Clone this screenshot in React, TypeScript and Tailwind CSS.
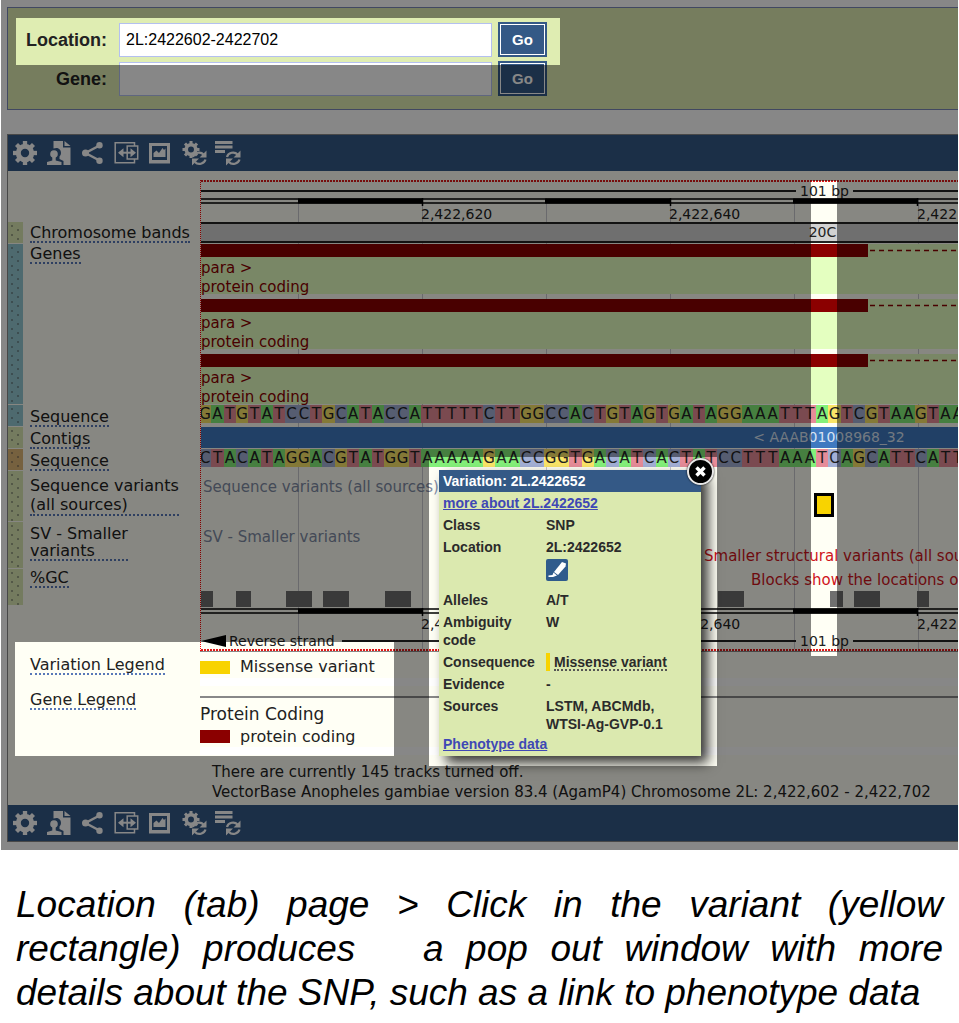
import type { ReactNode } from "react";

const FORWARD = "GATGTATCCTGCATACCATTTTTCTTGGCCACTGTAGTGATAGGAAATTTAGTCGTAAGTAA";
const REVERSE = "CTACATAGGACGTATGGTAAAAAGAACCGGTGACATCACTATCCTTTAAATCAGCATTCATT";

const baseColour: Record<string, string> = {
  A: "bg-[#84f07a]",
  C: "bg-[#a3b0d6]",
  G: "bg-[#fae568]",
  T: "bg-[#e68c98]",
};

function Gear({ cx, cy, r }: { cx: number; cy: number; r: number }) {
  const teeth = [0, 45, 90, 135, 180, 225, 270, 315];
  return (
    <g stroke="currentColor" fill="none">
      <circle cx={cx} cy={cy} r={r * 0.56} strokeWidth={r * 0.42} />
      {teeth.map((a) => (
        <path
          key={a}
          d={`M${cx} ${cy - r * 0.65}V${cy - r}`}
          strokeWidth={r * 0.36}
          transform={`rotate(${a} ${cx} ${cy})`}
        />
      ))}
    </g>
  );
}

function Reload() {
  return (
    <g>
      <path d="M10 16c1-4.500 7.500-6 10.500-2.500M22.500 18.500c-1.200 4.500-7.500 6-10.500 2.500" fill="none" stroke="currentColor" strokeWidth="2.200" />
      <path d="M23.500 9.500v7h-7zM9 24.500v-7h7z" fill="currentColor" />
    </g>
  );
}

const tools: { label: string; art: ReactNode }[] = [
  { label: "Configure this page", art: <Gear cx={12} cy={12} r={12} /> },
  {
    label: "Manage your data",
    art: (
      <g>
        <path d="M6.500 0h9.500v6.500h7.500V24H16.500v-4l-4-2v-2.500c2.500-2.500 1.800-7-1.500-8.300-1.500-.5-3-.2-4.500.3z" fill="currentColor" />
        <path d="M17.500 0l6 5h-6z" fill="currentColor" />
        <circle cx="7" cy="13" r="3.800" fill="currentColor" />
        <path d="M5.300 15h3.400v4.500l5.800 1.500V24H0v-3l5.300-1.500z" fill="currentColor" />
      </g>
    ),
  },
  {
    label: "Share this page",
    art: (
      <g fill="currentColor">
        <path d="M18.500 4.500L4.500 12l14 7.500" fill="none" stroke="currentColor" strokeWidth="2.500" />
        <circle cx="18.500" cy="4.300" r="3.200" />
        <circle cx="4.500" cy="12" r="3.500" />
        <circle cx="18.500" cy="19.700" r="3.200" />
      </g>
    ),
  },
  {
    label: "Resize this image",
    art: (
      <g fill="none" stroke="currentColor">
        <path d="M19.500 5V1.700H.2v20h19.300V18M12.200 5h10.500v13H12.200z" strokeWidth="1.500" />
        <path d="M4.500 11.700h14.500" strokeWidth="2" />
        <path d="M8.500 7.200v9L3 11.700zM15.500 7.200v9l5.500-4.500z" fill="currentColor" stroke="none" />
      </g>
    ),
  },
  {
    label: "Export this image",
    art: (
      <g>
        <path d="M0 2h21v20.500H0zM3 5v14h15V5z" fill="currentColor" fillRule="evenodd" />
        <path d="M4.500 16v-4l3-2.500 2.500 2.500 3.500-5 1.500 2 1.500-1.500V16z" fill="currentColor" />
      </g>
    ),
  },
  {
    label: "Reset configuration",
    art: (
      <g>
        <Gear cx={8} cy={8.5} r={8.5} />
        <Reload />
      </g>
    ),
  },
  {
    label: "Reset track order",
    art: (
      <g>
        <path d="M-2 1.500h17.500M-2 6h17.500M-2 10.500h10" stroke="currentColor" strokeWidth="2.800" />
        <Reload />
      </g>
    ),
  },
];

function Toolbar() {
  return (
    <div className="flex h-9 items-center gap-2.5 bg-[#345986] pl-[5px] text-white">
      {tools.map((t) => (
        <button key={t.label} type="button" aria-label={t.label} className="size-6">
          <svg viewBox="0 0 24 24" className="size-6 overflow-visible">
            {t.art}
          </svg>
        </button>
      ))}
    </div>
  );
}

function SearchRow({ id, label, value }: { id: string; label: string; value: string }) {
  return (
    <div className="flex h-[35px] items-center">
      <label htmlFor={id} className="w-[99px] text-right text-lg font-bold text-[#222]">
        {label}
      </label>
      <input
        id={id}
        defaultValue={value}
        className="ml-3 h-[34px] w-[373px] border border-[#b4c0f0] bg-white px-[6px] text-base text-black"
      />
      <button
        type="button"
        className="ml-[6px] h-[35px] w-[49px] border border-[#345986] bg-[#345986] p-px text-[15px] font-bold text-white"
      >
        <span className="flex h-full items-center justify-center border border-white pt-px">Go</span>
      </button>
    </div>
  );
}

type Tone = "green" | "teal" | "orange" | "none";
const tones: Record<Tone, string> = {
  green: "bg-[#dbe8b4]",
  teal: "bg-[#93c8d2]",
  orange: "bg-[#dfb878]",
  none: "",
};
const speckle =
  "bg-[radial-gradient(circle_at_4px_4px,#4446_1px,transparent_1.500px),radial-gradient(circle_at_10px_8px,#4446_1px,transparent_1.500px)] bg-[length:15px_9px]";

function TrackName({
  tone,
  height,
  lead,
  children,
}: {
  tone: Tone;
  height: string;
  lead: string;
  children: ReactNode;
}) {
  return (
    <div className={`flex ${height}`}>
      <div className={`mb-px w-[15px] ${tones[tone]} ${tone === "none" ? "" : speckle}`} />
      <div className={`pl-[7px] ${lead}`}>
        <a href="#track" className="block w-fit border-b-2 border-dotted border-[#5878b8]">
          {children}
        </a>
      </div>
    </div>
  );
}

function Bases({ sequence }: { sequence: string }) {
  return (
    <div className="h-[22px]">
      <div className="-ml-0.5 grid h-[18px] w-[765px] grid-cols-62 text-center text-[15px] leading-[18px]">
        {sequence.split("").map((b, i) => (
          <span key={i} className={baseColour[b]}>
            {b}
          </span>
        ))}
      </div>
    </div>
  );
}

function ScaleBar() {
  return (
    <svg className="block h-2 w-[1250px]" viewBox="0 0 1250 8">
      <path d="M0 1H1250M0 5H1250" stroke="#000" strokeWidth="1.500" />
      <path d="M97 3H221M344 3H469M592 3H716M840 3H963" stroke="#000" strokeWidth="5" />
      <path d="M221.500 0V8M469.500 0V8M716.500 0V8" stroke="#000" strokeWidth="1.500" />
    </svg>
  );
}

function ScaleLabels() {
  return (
    <div className="flex pl-[220px] text-[14px] leading-4 text-[#222]">
      <span className="w-[248px] shrink-0">2,422,620</span>
      <span className="w-[248px] shrink-0">2,422,640</span>
      <span className="w-[247px] shrink-0">2,422,660</span>
    </div>
  );
}

function DottedEdge() {
  return (
    <div className="h-0.5 bg-[#fffff5]">
      <div className="h-full bg-[repeating-linear-gradient(to_right,#e01818_0px,#e01818_2px,#fffff500_2px,#fffff500_3px)]" />
    </div>
  );
}

function Transcript() {
  return (
    <div className="h-[55px] pb-[5px]">
      <div className="h-[50px] bg-[#e4ffc0] text-[15px] text-[#8b0000]">
        <div className="flex items-center">
          <div className="h-[13px] w-[667px] shrink-0 bg-[#8b0000]" />
          <svg className="h-[13px] w-[560px] shrink-0" viewBox="0 0 560 13">
            <path d="M2 6.500H560" stroke="#8b0000" strokeWidth="1.500" strokeDasharray="5 4" />
          </svg>
        </div>
        <p className="pt-0.5 leading-[19px]">para &gt;</p>
        <p className="leading-[18px]">protein coding</p>
      </div>
    </div>
  );
}

const gcBlocks = [
  [0, 12],
  [35, 15],
  [85, 26],
  [122, 26],
  [184, 26],
  [517, 26],
  [629, 13],
  [653, 26],
  [716, 12],
];

function Tracks() {
  return (
    <div className="mt-[9px] overflow-hidden border-l border-dotted border-[#ff0000] bg-[linear-gradient(to_right,#c9c9cf_1px,transparent_1px)] bg-[length:124px_100%] bg-[position:97px_0] whitespace-nowrap">
      <DottedEdge />
      <div className="flex h-4 items-center bg-[#fffff5] pt-0.5 text-[14px] leading-none text-[#222]">
        <span className="h-0.5 w-[595px] shrink-0 bg-[#222]" />
        <span className="w-[57px] shrink-0 text-center">101 bp</span>
        <span className="h-0.5 flex-1 bg-[#222]" />
      </div>
      <ScaleBar />
      <div className="h-4">
        <ScaleLabels />
      </div>
      <div className="h-[22px]">
        <div className="h-[21px] w-[1250px] border-y-2 border-[#222] bg-[#d2d2d2] pr-[7px] text-center text-[14px] leading-[17px] text-[#222]">
          20C
        </div>
      </div>
      <Transcript />
      <Transcript />
      <div className="h-[51px] overflow-hidden">
        <Transcript />
      </div>
      <Bases sequence={FORWARD} />
      <div className="mb-px h-[21px] w-[1256px] bg-[#3f79c0] text-center text-[14px] leading-5 text-[#d8e4f4]">
        &lt; AAAB01008968_32
      </div>
      <Bases sequence={REVERSE} />
      <div className="relative h-[51px] pl-0.5 pt-[5px] text-[15px] text-[#808ca5]">
        Sequence variants (all sources)
        <button
          type="button"
          aria-label="Variation 2L.2422652"
          className="absolute left-[613px] top-[22px] h-6 w-5 border-[3px] border-black bg-[#f8d300]"
        />
      </div>
      <div className="h-[47px] pl-0.5 text-[15px] leading-[19px] text-[#808ca5]">
        <p className="pt-[6px]">SV - Smaller variants</p>
        <p className="pl-[501px] text-[#d0141c]">Smaller structural variants (all sources)</p>
      </div>
      <div className="h-[39px] text-[15px] leading-[23px] text-[#d0141c]">
        <p className="h-[22px] pl-[550px]">Blocks show the locations of structural variants</p>
        <svg className="block h-4 w-[1250px]" viewBox="0 0 1250 16">
          {gcBlocks.map(([x, w]) => (
            <rect key={x} x={x} y="0" width={w} height="16" fill="#6f6f6f" />
          ))}
        </svg>
      </div>
      <ScaleBar />
      <ScaleLabels />
      <div className="flex h-[17px] items-center text-[14px] leading-none text-[#222]">
        <svg className="h-3 w-[25px] shrink-0" viewBox="0 0 25 12">
          <path d="M0 6L25 0V12z" fill="#000" />
        </svg>
        <span className="w-[116px] shrink-0 pl-[3px]">Reverse strand</span>
        <span className="h-0.5 w-[454px] shrink-0 bg-[#222]" />
        <span className="w-[57px] shrink-0 text-center">101 bp</span>
        <span className="h-0.5 flex-1 bg-[#222]" />
      </div>
      <DottedEdge />
    </div>
  );
}

function Fact({ name, children }: { name: string; children: ReactNode }) {
  return (
    <tr className="align-top">
      <th scope="row" className="w-[103px] py-0.5 pr-2 text-left">
        {name}
      </th>
      <td className="py-0.5">{children}</td>
    </tr>
  );
}

function VariationPopup() {
  return (
    <section
      aria-label="Variation: 2L.2422652"
      className="absolute left-[438px] top-[470px] w-[262px] bg-[#dbe9af] text-[14px] leading-[18px] font-bold text-[#2b2b2b] shadow-[7px_7px_12px_#000c]"
    >
      <h2 className="bg-[#345986] px-1 py-0.5 text-white">Variation: 2L.2422652</h2>
      <button
        type="button"
        aria-label="Close"
        className="absolute -right-[13px] -top-3 size-[27px] rounded-full border-2 border-[#e8e8e8] bg-black shadow-[0_0_2px_#000]"
      >
        <svg viewBox="0 0 23 23" className="size-full">
          <path d="M7.500 7.500l8 8M15.500 7.500l-8 8" stroke="#fff" strokeWidth="3.500" />
        </svg>
      </button>
      <div className="px-1">
        <p className="py-0.5">
          <a href="#variation" className="text-[#3f48b5] underline">
            more about 2L.2422652
          </a>
        </p>
        <table className="w-full border-collapse">
          <tbody>
            <Fact name="Class">SNP</Fact>
            <Fact name="Location">
              2L:2422652
              <button type="button" aria-label="Mark location" className="mb-[6px] mt-[3px] block size-[22px] rounded-xs bg-[#2f5b8c]">
                <svg viewBox="0 0 22 22" className="size-[22px]">
                  <path d="M16 3l4 1.500-.5 3-7.500 8.500-4-3z" fill="#fff" />
                  <path d="M7.500 13.500l3.500 3-4 1.500H2.500v-1.500l4-.5z" fill="#fff" />
                </svg>
              </button>
            </Fact>
            <Fact name="Alleles">A/T</Fact>
            <Fact name="Ambiguity code">W</Fact>
            <Fact name="Consequence">
              <span className="flex h-[18px]">
                <span className="mr-1 w-1 bg-[#f8d300]" />
                <span className="border-b-2 border-dotted border-[#555]">Missense variant</span>
              </span>
            </Fact>
            <Fact name="Evidence">-</Fact>
            <Fact name="Sources">
              LSTM, ABCMdb,
              <br />
              WTSI-Ag-GVP-0.1
            </Fact>
          </tbody>
        </table>
        <p className="pb-[3px]">
          <a href="#phenotype" className="text-[#3f48b5] underline">
            Phenotype data
          </a>
        </p>
      </div>
    </section>
  );
}

export default function App() {
  return (
    <main className="overflow-hidden bg-white font-['Liberation_Sans',Arial,sans-serif]">
      <div className="relative mx-px overflow-hidden bg-white pb-2 pl-[6px] pt-[7px]">
        <form className="flex flex-col gap-1 border-y border-l border-[#7c89b8] bg-[#dfedb2] pb-[13px] pt-[14px]">
          <SearchRow id="location" label="Location:" value="2L:2422602-2422702" />
          <SearchRow id="gene" label="Gene:" value="" />
        </form>

        <section className="mt-6 border-y border-l border-[#888] bg-[#fffff5] font-['DejaVu_Sans',sans-serif] text-base text-[#222]">
          <Toolbar />
          <div className="flex">
            <div className="w-[192px] shrink-0 pt-[51px] leading-[17px]">
              <TrackName tone="green" height="h-[22px]" lead="pt-0.5">Chromosome bands</TrackName>
              <TrackName tone="teal" height="h-[161px]" lead="pt-px">Genes</TrackName>
              <TrackName tone="teal" height="h-[22px]" lead="pt-[3px]">Sequence</TrackName>
              <TrackName tone="green" height="h-[22px]" lead="pt-[3px]">Contigs</TrackName>
              <TrackName tone="orange" height="h-[22px]" lead="pt-[3px]">Sequence</TrackName>
              <TrackName tone="green" height="h-[51px]" lead="pt-[5px] leading-[19px]">
                Sequence variants
                <br />
                (all sources)
              </TrackName>
              <TrackName tone="green" height="h-[47px]" lead="pt-[3px]">
                SV - Smaller
                <br />
                variants
              </TrackName>
              <TrackName tone="green" height="h-[37px]" lead="">%GC</TrackName>
              <TrackName tone="none" height="h-[35px]" lead="pt-[50px]">Variation Legend</TrackName>
              <TrackName tone="none" height="h-[35px]" lead="pt-[50px]">Gene Legend</TrackName>
            </div>
            <div className="min-w-0 flex-1">
              <Tracks />
              <div className="h-[47px] border-b-2 border-[#888] border-t-[#888] border-t">
                <div className="flex h-[26px] items-center pt-1">
                  <span className="h-[13px] w-[30px] bg-[#f8d300]" />
                  <span className="pl-2.5">Missense variant</span>
                </div>
                <div className="h-2 bg-white" />
              </div>
              <h3 className="pt-1 text-[17px] leading-6">Protein Coding</h3>
              <div className="flex h-[21px] items-center">
                <span className="h-[13px] w-[30px] bg-[#8b0000]" />
                <span className="pl-2.5">protein coding</span>
              </div>
              <div className="h-2 bg-white" />
              <div className="whitespace-nowrap pb-[3px] pl-3 pt-[7px] text-[15px] leading-5">
                <p>There are currently 145 tracks turned off.</p>
                <p>VectorBase Anopheles gambiae version 83.4 (AgamP4) Chromosome 2L: 2,422,602 - 2,422,702</p>
              </div>
            </div>
          </div>
          <Toolbar />
        </section>

        <VariationPopup />

        {/* Dimming layer with a clear window over each highlighted area */}
        <div
          aria-hidden="true"
          className="pointer-events-none absolute inset-0 bg-black/47 [clip-path:path(evenodd,'M0_0H9999V9999H0ZM15_18H559V65H15ZM810_181H836V656H810ZM14_642H393V756H14ZM428_457H716V766H428Z')]"
        />
      </div>

      <p className="px-4 pt-[33px] text-[37px] leading-[44px] text-black italic">
        <span className="block text-justify [text-align-last:justify]">
          Location (tab) page &gt; Click in the variant (yellow
        </span>
        <span className="block text-justify [text-align-last:justify]">
          rectangle) produces {"\u00a0"} a pop out window with more
        </span>
        <span className="block">details about the SNP, such as a link to phenotype data</span>
      </p>
    </main>
  );
}
